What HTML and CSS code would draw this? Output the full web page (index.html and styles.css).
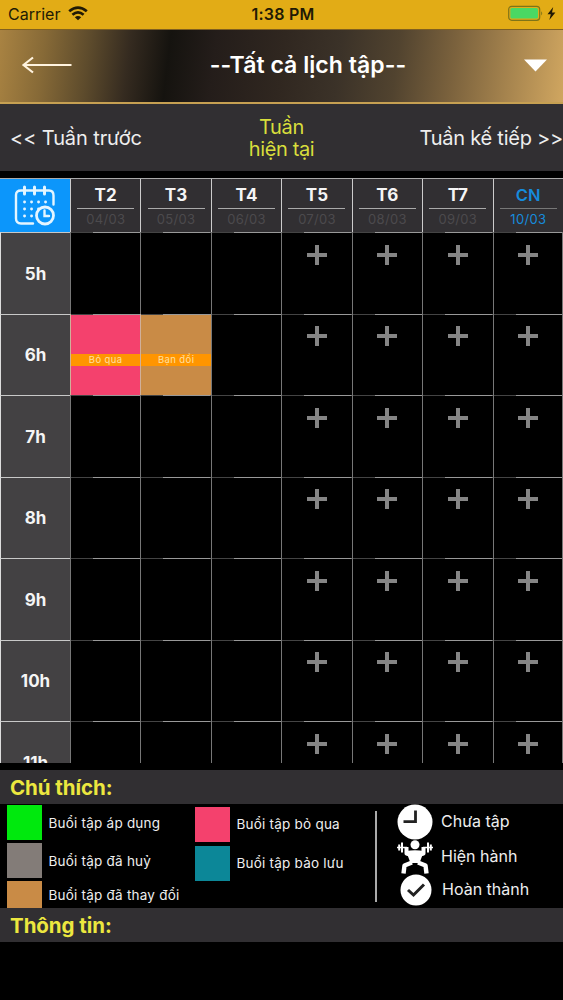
FILE: index.html
```html
<!DOCTYPE html>
<html lang="vi">
<head>
<meta charset="utf-8">
<title>Tất cả lịch tập</title>
<link rel="stylesheet" href="styles.css">
</head>
<body>
<svg class="defs" width="0" height="0"><symbol id="plus" viewBox="0 0 22 22"><path d="M11 1v20M1 11h20" stroke="#858585" stroke-width="4" fill="none"/></symbol></svg>
<div class="status">
  <div class="carrier"><span>Carrier</span>
    <svg width="20" height="15" viewBox="0 0 20 15" fill="none" stroke="#211a05" stroke-width="2.7"><path d="M1.2 5.3Q10 -2.2 18.8 5.3M4.4 8.7Q10 4 15.6 8.7"/><path d="M10 14.3L6.8 11.2Q10 8.7 13.2 11.2Z" fill="#211a05" stroke="none"/></svg>
  </div>
  <div class="clock">1:38 PM</div>
  <svg class="battery" width="50" height="17" viewBox="0 0 50 17"><rect x=".7" y="1.3" width="31" height="14" rx="3" fill="none" stroke="#7f7418" stroke-width="1.2"/><rect x="2.4" y="3" width="27.6" height="10.6" rx="1.5" fill="#4ad863"/><path d="M33.2 6.2q2 2.2 0 4.4z" fill="#7f7418"/><path d="M45.2 2L39.5 9.2h3.3L41.3 15 47.4 7.5H44z" fill="#211a05"/></svg>
</div>
<header class="header">
  <svg class="back" width="52" height="18" viewBox="0 0 52 18" fill="none" stroke="#fff3df" stroke-width="2.2"><path d="M2 9H50.500M12 1.500L2.500 9l9.500 7.500"/></svg>
  <h1>--Tất cả lịch tập--</h1>
  <svg class="caret" width="23" height="13" viewBox="0 0 23 13"><path d="M0 .5h23L11.5 12.5z" fill="#fff"/></svg>
</header>
<nav class="weeks">
  <span class="prev">&lt;&lt; Tuần trước</span>
  <span class="now">Tuần<br>hiện tại</span>
  <span class="next">Tuần kế tiếp &gt;&gt;</span>
</nav>
<main class="calendar">
  <div class="row head">
    <div class="corner"><svg width="42" height="42" viewBox="0 0 42 42" fill="none" stroke="#e4f5ff" stroke-width="2.400" stroke-linecap="round"><path d="M19 38.500H7q-5 0-5-5V10q0-4.500 5-4.500H35q4.500 0 4.500 5V19.500"/><path d="M10.500 2v7M20.500 2v7M30.500 2v7" stroke-width="3"/><path d="M10.500 17h.1M17.500 17h.1M24.500 17h.1M31.500 17h.1M10.500 24h.1M17.500 24h.1M24.500 24h.1M10.500 31h.1M17.500 31h.1" stroke-width="2.800"/><circle cx="31" cy="30.500" r="8.500" stroke-width="2.800"/><path d="M30.500 25.500v5.500h4.500"/></svg></div>
    <div class="day"><b>T2</b><small>04/03</small></div>
    <div class="day"><b>T3</b><small>05/03</small></div>
    <div class="day"><b>T4</b><small>06/03</small></div>
    <div class="day"><b>T5</b><small>07/03</small></div>
    <div class="day"><b>T6</b><small>08/03</small></div>
    <div class="day"><b>T7</b><small>09/03</small></div>
    <div class="day sunday"><b>CN</b><small>10/03</small></div>
  </div>
  <div class="row"><div class="hour">5h</div><div class="slot"></div><div class="slot"></div><div class="slot"></div><div class="slot"><svg><use href="#plus"/></svg></div><div class="slot"><svg><use href="#plus"/></svg></div><div class="slot"><svg><use href="#plus"/></svg></div><div class="slot"><svg><use href="#plus"/></svg></div></div>
  <div class="row"><div class="hour">6h</div><div class="slot skipped"><span>Bỏ qua</span></div><div class="slot changed"><span>Bạn đổi</span></div><div class="slot"></div><div class="slot"><svg><use href="#plus"/></svg></div><div class="slot"><svg><use href="#plus"/></svg></div><div class="slot"><svg><use href="#plus"/></svg></div><div class="slot"><svg><use href="#plus"/></svg></div></div>
  <div class="row"><div class="hour">7h</div><div class="slot"></div><div class="slot"></div><div class="slot"></div><div class="slot"><svg><use href="#plus"/></svg></div><div class="slot"><svg><use href="#plus"/></svg></div><div class="slot"><svg><use href="#plus"/></svg></div><div class="slot"><svg><use href="#plus"/></svg></div></div>
  <div class="row"><div class="hour">8h</div><div class="slot"></div><div class="slot"></div><div class="slot"></div><div class="slot"><svg><use href="#plus"/></svg></div><div class="slot"><svg><use href="#plus"/></svg></div><div class="slot"><svg><use href="#plus"/></svg></div><div class="slot"><svg><use href="#plus"/></svg></div></div>
  <div class="row"><div class="hour">9h</div><div class="slot"></div><div class="slot"></div><div class="slot"></div><div class="slot"><svg><use href="#plus"/></svg></div><div class="slot"><svg><use href="#plus"/></svg></div><div class="slot"><svg><use href="#plus"/></svg></div><div class="slot"><svg><use href="#plus"/></svg></div></div>
  <div class="row"><div class="hour">10h</div><div class="slot"></div><div class="slot"></div><div class="slot"></div><div class="slot"><svg><use href="#plus"/></svg></div><div class="slot"><svg><use href="#plus"/></svg></div><div class="slot"><svg><use href="#plus"/></svg></div><div class="slot"><svg><use href="#plus"/></svg></div></div>
  <div class="row"><div class="hour">11h</div><div class="slot"></div><div class="slot"></div><div class="slot"></div><div class="slot"><svg><use href="#plus"/></svg></div><div class="slot"><svg><use href="#plus"/></svg></div><div class="slot"><svg><use href="#plus"/></svg></div><div class="slot"><svg><use href="#plus"/></svg></div></div>
</main>
<h2 class="bar">Chú thích:</h2>
<section class="legend">
  <div class="keys first">
    <div class="key green"><i></i><span>Buổi tập áp dụng</span></div>
    <div class="key gray"><i></i><span>Buổi tập đã huỷ</span></div>
    <div class="key tan"><i></i><span>Buổi tập đã thay đổi</span></div>
  </div>
  <div class="keys second">
    <div class="key pink"><i></i><span>Buổi tập bỏ qua</span></div>
    <div class="key teal"><i></i><span>Buổi tập bảo lưu</span></div>
  </div>
  <div class="states">
    <div class="state pending"><svg width="36" height="36" viewBox="0 0 36 36"><circle cx="18" cy="18" r="17.500" fill="#fff"/><path d="M18.500 6.500v11.200H6.500" fill="none" stroke="#222" stroke-width="2.800"/></svg><span>Chưa tập</span></div>
    <div class="state current"><svg width="36" height="34" viewBox="0 0 36 34" fill="none" stroke="#fff"><circle cx="18" cy="4.800" r="4.500" fill="#fff" stroke="none"/><path d="M0 7.500H10M26 7.500h10" stroke-width="1.700"/><path d="M2.200 4.500v6M5 2.500v10M33.800 4.500v6M31 2.500v10" stroke-width="2"/><path d="M9.500 7v6.500l5 1.500M26.500 7v6.500l-5 1.500" stroke-width="4" stroke-linejoin="round"/><path d="M9 11q9-1.500 18 0l-4.500 12h-9z" fill="#fff" stroke="none"/><path d="M15 22.500L7.500 25.500 6.500 33.500M21 22.500l7.500 3 1 8" stroke-width="4.400" stroke-linejoin="round"/></svg><span>Hiện hành</span></div>
    <div class="state done"><svg width="32" height="32" viewBox="0 0 32 32"><circle cx="16" cy="16" r="15.500" fill="#fff"/><path d="M8 16l5.500 5L24 10.500" fill="none" stroke="#222" stroke-width="3"/></svg><span>Hoàn thành</span></div>
  </div>
</section>
<h2 class="bar">Thông tin:</h2>
</body>
</html>
```

FILE: styles.css
```css
* { box-sizing: border-box; }
body { margin: 0; width: 563px; height: 1000px; overflow: hidden; background: #000; color: #eee; font-family: Inter, "Noto Sans", sans-serif; }
svg { display: block; flex: none; }
h1, h2 { margin: 0; }
span, b, small { white-space: nowrap; }
.defs { position: absolute; }

.status { height: 29px; background: #e2ac16; color: #211a05; display: grid; grid-template-columns: 1fr auto 1fr; align-items: center; padding: 0 5px 2px 8px; font-size: 16px; }
.carrier { display: flex; gap: 8px; align-items: center; }
.clock { font-weight: 600; letter-spacing: .2px; }
.battery { justify-self: end; }

.header { height: 75px; display: flex; align-items: center; padding: 0 16px 2px 21px; border-top: 1px solid #80601f; border-bottom: 2px solid #c6a052;
  background: linear-gradient(97deg, #a98342 0, #876a37 8%, #5d4b2c 16%, #352b20 23%, #15130f 30%, #241d1a 38%, #302720 50%, #3b3228 60%, #51432f 70%, #7b623d 80%, #a6844e 90%, #d0a660 100%); }
.header h1 { flex: 1; padding-left: 19px; text-align: center; font-size: 23px; line-height: 30px; font-weight: 600; letter-spacing: .05px; color: #fff; }

.weeks { height: 67px; background: #312f32; display: grid; grid-template-columns: 211px 141px 211px; align-items: center; font-size: 20px; line-height: 22px; }
.prev { padding-left: 10px; letter-spacing: -.1px; }
.now { text-align: center; color: #d8de3c; letter-spacing: -.35px; }
.next { justify-self: end; letter-spacing: -.25px; }

.calendar { height: 585px; margin: 7px 0; overflow: hidden; }
.row { display: grid; grid-template-columns: 70px repeat(7, 1fr); height: 81.5px; }
.head { height: 54px; border-top: 1px solid #aaa; }
.corner { background: #0c96fb; display: flex; align-items: center; justify-content: center; }
.day { background: #312f32; border-left: 1px solid #ccc; display: flex; flex-direction: column; align-items: center; }
.day b { width: 57px; height: 30px; border-bottom: 1px solid #aaa; text-align: center; font-size: 17px; line-height: 33px; letter-spacing: .2px; color: #f5f5f5; }
.day small { font-size: 13px; line-height: 20px; letter-spacing: .3px; color: #4c4a4d; }
.day.sunday b, .day.sunday small { color: #168bdc; }
.day.sunday b { border-bottom-color: #777; font-weight: 600; font-size: 16.5px; }
.hour { background: #434143; border-left: 1px solid #ddd; border-top: 1px solid #c8c8c8; display: flex; align-items: center; justify-content: center; padding-top: 1px; font-size: 17px; font-weight: 700; color: #f5f5f5; }
.slot { border-left: 1px solid #777; display: flex; flex-direction: column; align-items: center; background: linear-gradient(90deg, #444 22px, #999 22px) top / 100% 1px no-repeat; }
.slot:last-child { border-right: 1px solid #777; }
.slot svg { width: 22px; height: 22px; margin-top: 11.5px; }
.skipped { background-color: #f4416d; }
.changed { background-color: #c98b46; }
.skipped, .changed { border-color: #d0b09a; }
.slot span { align-self: stretch; margin-top: 40.5px; height: 12px; background: #ff9500; color: #ffe0a0; text-align: center; font-size: 9.5px; line-height: 12px; letter-spacing: .4px; }

.bar { height: 34px; padding-left: 10px; background: #312f32; color: #ece73f; font-size: 20.5px; line-height: 35px; font-weight: 700; letter-spacing: -.05px; }
.legend { height: 104px; display: grid; grid-template-columns: 188px 187px 1fr; overflow: hidden; }
.keys { display: flex; flex-direction: column; padding-left: 7px; }
.first { padding-top: 1px; gap: 3px; }
.second { padding-top: 2.5px; gap: 4px; }
.key { display: flex; align-items: center; gap: 6.5px; height: 35px; flex: none; font-size: 13.5px; letter-spacing: .22px; }
.key i { width: 35px; height: 35px; }
.key.tan { height: 28px; }
.key.tan i { height: 30px; margin-top: 1px; }
.green i { background: #00e90d; }
.gray i { background: #837c78; }
.tan i { background: #c98b46; }
.pink i { background: #f4416d; }
.teal i { background: #0c8798; }
.states { padding: 0 0 0 22px; background: linear-gradient(#aaa, #aaa) 0 7px / 2px 91px no-repeat; }
.state { display: flex; align-items: center; font-size: 16px; }
.state span { padding-left: 8px; }
.pending span { padding-bottom: 2px; }
.current span { padding-bottom: 3px; }
.done { padding-left: 3px; }
.done span { padding: 0 0 2px 10px; }
```
